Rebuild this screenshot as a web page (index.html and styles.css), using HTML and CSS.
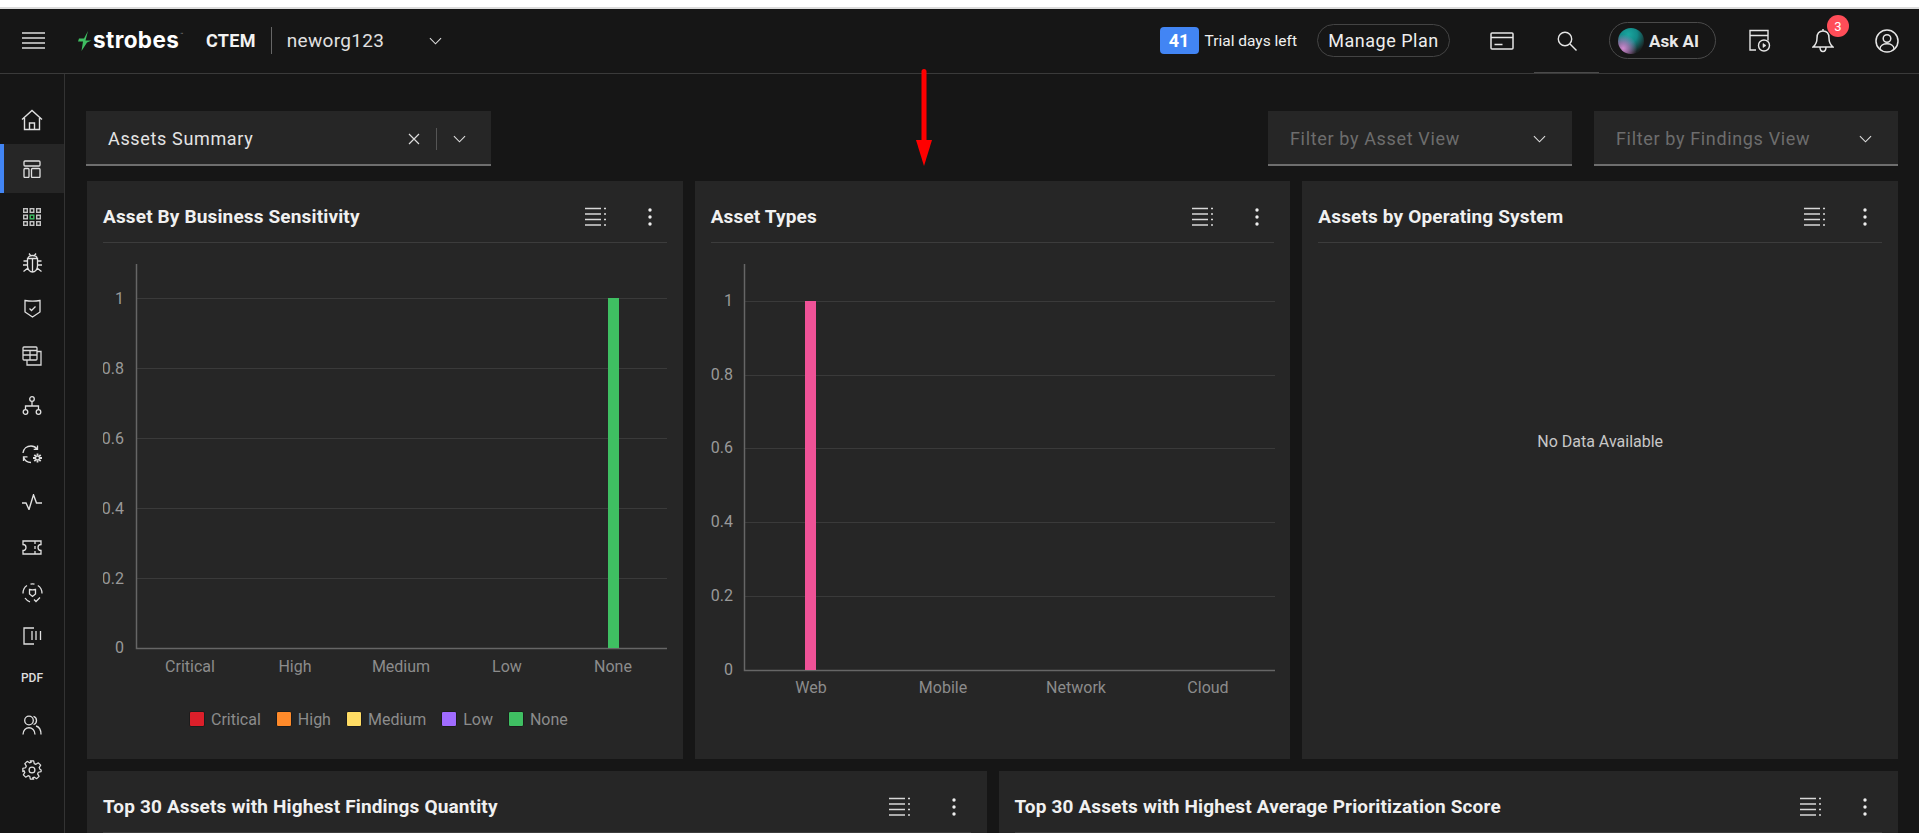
FILE: index.html
```html
<!DOCTYPE html>
<html lang="en">
<head>
<meta charset="utf-8">
<title>Assets Summary</title>
<link rel="stylesheet" href="styles.css">
</head>
<body>
<svg class="defs" width="0" height="0" aria-hidden="true">
  <symbol id="chev" viewBox="0 0 14 8"><path d="M1 1l6 6 6-6" fill="none" stroke="currentColor" stroke-width="1.2"/></symbol>
  <symbol id="list" viewBox="0 0 22 19"><path d="M0 1.5h16M0 7h16M0 12.5h16M0 18h16" stroke="currentColor" stroke-width="1.6"/><path d="M19 1.5h2M19 7h2M19 12.5h2M19 18h2" stroke="currentColor" stroke-width="1.6"/></symbol>
  <symbol id="kebab" viewBox="0 0 4 18"><circle cx="2" cy="2" r="1.7" fill="currentColor"/><circle cx="2" cy="9" r="1.7" fill="currentColor"/><circle cx="2" cy="16" r="1.7" fill="currentColor"/></symbol>
</svg>

<div class="strip"></div>

<header class="header">
  <svg class="burger" width="23" height="17" viewBox="0 0 23 17"><path d="M0 1h23M0 6h23M0 11h23M0 16h23" stroke="#ddd" stroke-width="1.3"/></svg>
  <div class="logo">
    <svg width="14" height="20" viewBox="0 0 14 20"><path d="M10 0L6 7.500H1L0 10.500h5L3.500 20 9 11.500 13.500 9.500H7.500z" fill="#3fbf62"/></svg>
    <span class="logo-text">strobes</span><span class="logo-tm">™</span>
  </div>
  <span class="product">CTEM</span>
  <span class="head-div"></span>
  <span class="org">neworg123</span>
  <svg class="org-chev" width="13" height="8"><use href="#chev"/></svg>

  <div class="head-right">
    <span class="days">41</span>
    <span class="trial">Trial days left</span>
    <span class="plan">Manage Plan</span>
    <svg class="ico-card" width="24" height="18" viewBox="0 0 24 18" fill="none" stroke="#e6e6e6" stroke-width="1.5"><rect x="1" y="1" width="22" height="16" rx="1"/><path d="M1 5.500h22M4.500 12.500h8"/></svg>
    <span class="search-wrap">
      <svg width="20" height="20" viewBox="0 0 20 20" fill="none" stroke="#e6e6e6" stroke-width="1.4"><circle cx="8" cy="8" r="6.700"/><path d="M13 13l6.500 6.500"/></svg>
    </span>
    <span class="ask"><span class="orb"></span><span>Ask AI</span></span>
    <svg class="ico-play" width="22" height="23" viewBox="0 0 22 23" fill="none" stroke="#e6e6e6" stroke-width="1.4"><path d="M1 6.500h18V1.500H1zM1 6.500V21h6M19 6.500v5"/><circle cx="15" cy="16.500" r="5.500"/><path d="M14 14.500v4l3-2z" fill="#e6e6e6" stroke-width=".6"/></svg>
    <span class="bell-wrap">
      <svg width="22" height="25" viewBox="0 0 22 25" fill="none" stroke="#e6e6e6" stroke-width="1.5"><path d="M11 1v2M11 3c-4 0-6 3-6 7 0 5-1.500 7-4 9h20c-2.500-2-4-4-4-9 0-4-2-7-6-7zM8 19c0 6 6 6 6 0"/></svg>
      <span class="bell-badge">3</span>
    </span>
    <svg class="ico-user" width="24" height="24" viewBox="0 0 24 24" fill="none" stroke="#e6e6e6" stroke-width="1.5"><circle cx="12" cy="12" r="11"/><circle cx="12" cy="9.500" r="3.800"/><path d="M5 20c0-7 14-7 14 0"/></svg>
  </div>
</header>

<div class="main">
  <nav class="side">
    <a class="nav-item">
      <svg width="22" height="22" viewBox="0 0 22 22" fill="none" stroke="#e0e0e0" stroke-width="1.4"><path d="M1 10.500L11 1.500l10 9M3.500 9v11.500h15V9M8.500 20.500V14h5v6.500"/></svg>
    </a>
    <a class="nav-item active">
      <svg width="18" height="18" viewBox="0 0 18 18" fill="none" stroke="#e0e0e0" stroke-width="1.3"><rect x="1" y="1" width="16" height="5" rx="1"/><rect x="1" y="8.500" width="5" height="9" rx="1"/><rect x="8.500" y="8.500" width="8.500" height="9" rx="1"/></svg>
    </a>
    <a class="nav-item">
      <svg width="18" height="18" viewBox="0 0 18 18" fill="none" stroke="#c4c4c4" stroke-width="1.400"><rect x=".7" y=".7" width="3.600" height="3.600"/><rect x="7.200" y=".7" width="3.600" height="3.600"/><rect x="13.700" y=".7" width="3.600" height="3.600"/><rect x=".7" y="7.200" width="3.600" height="3.600"/><rect x="7.200" y="7.200" width="3.600" height="3.600" stroke="#3fbf62"/><rect x="13.700" y="7.200" width="3.600" height="3.600"/><rect x=".7" y="13.700" width="3.600" height="3.600"/><rect x="7.200" y="13.700" width="3.600" height="3.600"/><rect x="13.700" y="13.700" width="3.600" height="3.600"/></svg>
    </a>
    <a class="nav-item">
      <svg width="21" height="20" viewBox="0 0 21 20" fill="none" stroke="#e0e0e0" stroke-width="1.300"><path d="M6 5.500C6 3.500 8 2.500 10.500 2.500s4.500 1 4.500 3M5.500 5.500h10V13c0 3.500-2.500 6-5 6s-5-2.500-5-6zM10.500 5.500V19M7 .5l1.500 2M14 .5l-1.500 2M5.500 8H1.500M15.500 8h4M5.500 12H1v0M15.500 12H20M6 15l-4.500 3.500M15 15l4.500 3.500"/></svg>
    </a>
    <a class="nav-item">
      <svg width="17" height="19" viewBox="0 0 17 19" fill="none" stroke="#e0e0e0" stroke-width="1.300"><path d="M1 1.500c5 .8 10 .8 15 0V13l-7.500 5L1 13z"/><path d="M5.500 9.500l2 2 4-4"/></svg>
    </a>
    <a class="nav-item">
      <svg width="20" height="20" viewBox="0 0 20 20" fill="none" stroke="#d8d8d8" stroke-width="1.300"><rect x="1" y="1" width="14" height="13" rx="1"/><path d="M1 4.500h14M1 9h14M8 4.500v9.500M5 14v5h14V5.500h-4"/></svg>
    </a>
    <a class="nav-item">
      <svg width="20" height="19" viewBox="0 0 20 19" fill="none" stroke="#e0e0e0" stroke-width="1.300"><circle cx="10" cy="3" r="2.300"/><circle cx="3.500" cy="16" r="2.300"/><circle cx="16.500" cy="16" r="2.300"/><path d="M10 5.500V10M3.500 13.500V10h13v3.500"/></svg>
    </a>
    <a class="nav-item">
      <svg width="21" height="19" viewBox="0 0 21 19" fill="none" stroke="#e0e0e0" stroke-width="1.300"><path d="M1 8C1.500 3.500 5 1 9 1c2.500 0 4.500 1 6 3M15.500 .5V4.300h-3.800M9 17.500C5 17.500 2.500 15 1.500 12M1.500 16v-4.200h4"/><circle cx="15.500" cy="13" r="2"/><path d="M15.500 8.500v2M15.500 15.500v2M11 13h2M18 13h2M12.300 9.800l1.400 1.400M17.300 14.800l1.400 1.400M12.300 16.200l1.400-1.400M17.300 11.200l1.400-1.400" stroke-width="1.800"/></svg>
    </a>
    <a class="nav-item">
      <svg width="20" height="16" viewBox="0 0 20 16" fill="none" stroke="#e0e0e0" stroke-width="1.400"><path d="M0 9h4l3 6.500L11.500.8l3 8.200H20"/></svg>
    </a>
    <a class="nav-item">
      <svg width="20" height="15" viewBox="0 0 20 15" fill="none" stroke="#e0e0e0" stroke-width="1.300"><path d="M1 1h18v3.500a3 3 0 0 0 0 6V14H1v-3.500a3 3 0 0 0 0-6zM13 1v3M13 6v3M13 11v3"/></svg>
    </a>
    <a class="nav-item">
      <svg width="21" height="20" viewBox="0 0 21 20" fill="none" stroke="#e0e0e0" stroke-width="1.300"><path d="M1 10.500C1 7 2.500 4 5 2.500M8.500 1.200a9 9 0 0 1 4 0M15.800 2.500C18.500 4 20 7 20 10.500M3 15c1 1.500 2.500 3 5 3.800"/><path d="M7.500 6.500c2 .5 4 .5 6 0v4.500l-3 2.500-3-2.500z"/><path d="M12 16.500l2 2 4-4"/></svg>
    </a>
    <a class="nav-item">
      <svg width="19" height="18" viewBox="0 0 19 18" fill="none" stroke="#e0e0e0" stroke-width="1.300"><path d="M11 1H1v16h10"/><path d="M9 4v9M13 4v9M17.500 4v9"/></svg>
    </a>
    <a class="nav-item"><span class="pdf">PDF</span></a>
    <a class="nav-item">
      <svg width="20" height="20" viewBox="0 0 20 20" fill="none" stroke="#e0e0e0" stroke-width="1.300"><circle cx="7" cy="5.500" r="4.300"/><path d="M1 19.500c0-9 12-9 12 0M11.500 1.300a4.300 4.300 0 0 1 0 8.200M14 11c3 .8 5 3.500 5 8.500"/></svg>
    </a>
    <a class="nav-item">
      <svg width="20" height="20" viewBox="0 0 24 24" fill="none" stroke="#e0e0e0" stroke-width="1.500"><circle cx="12" cy="12" r="3.500"/><path d="M10 1h4l.7 3.300 2 .9 2.900-1.800 2.800 2.800-1.800 2.900.9 2L23 12v0l-.1 1.900-3.300.8-.9 2 1.800 2.900-2.800 2.800-2.900-1.800-2 .9L14 23h-4l-.7-3.300-2-.9-2.900 1.800-2.800-2.800 1.800-2.900-.9-2L1 14v-4l3.300-.7.9-2L3.400 4.400l2.800-2.800 2.900 1.800 2-.9z" stroke-linejoin="round"/></svg>
    </a>
  </nav>

  <main class="content">
    <div class="toolbar">
      <div class="select select-main">
        <span class="select-value">Assets Summary</span>
        <svg class="sel-x" width="12" height="12" viewBox="0 0 12 12"><path d="M1 1l10 10M11 1L1 11" stroke="#ddd" stroke-width="1.200"/></svg>
        <span class="sel-div"></span>
        <svg class="sel-chev" width="13" height="8"><use href="#chev"/></svg>
      </div>
      <div class="select select-filter">
        <span class="select-hint">Filter by Asset View</span>
        <svg class="sel-chev" width="13" height="8"><use href="#chev"/></svg>
      </div>
      <div class="select select-filter">
        <span class="select-hint">Filter by Findings View</span>
        <svg class="sel-chev" width="13" height="8"><use href="#chev"/></svg>
      </div>
    </div>

    <section class="row row-3">
      <article class="card">
        <div class="card-head">
          <h2 class="card-title">Asset By Business Sensitivity</h2>
          <svg class="ic-list" width="22" height="19"><use href="#list"/></svg>
          <svg class="ic-kebab" width="4" height="18"><use href="#kebab"/></svg>
        </div>
        <svg class="chart chart-a" width="564" height="465">
          <g class="grid">
            <path d="M34 55.500H564M34 125.500H564M34 195.500H564M34 265.500H564M34 335.500H564"/>
          </g>
          <path class="axis" d="M33.500 21V405.500H564"/>
          <rect x="505" y="55" width="11" height="350" fill="#3fbf62"/>
          <g class="ylab">
            <text x="21" y="61">1</text><text x="21" y="131">0.8</text><text x="21" y="201">0.6</text><text x="21" y="271">0.4</text><text x="21" y="341">0.2</text><text x="21" y="410">0</text>
          </g>
          <g class="xlab">
            <text x="87" y="429">Critical</text><text x="192" y="429">High</text><text x="298" y="429">Medium</text><text x="404" y="429">Low</text><text x="510" y="429">None</text>
          </g>
        </svg>
        <div class="legend">
          <span class="lg"><i class="sw sw-red"></i>Critical</span>
          <span class="lg"><i class="sw sw-orange"></i>High</span>
          <span class="lg"><i class="sw sw-yellow"></i>Medium</span>
          <span class="lg"><i class="sw sw-purple"></i>Low</span>
          <span class="lg"><i class="sw sw-green"></i>None</span>
        </div>
      </article>

      <article class="card">
        <div class="card-head">
          <h2 class="card-title">Asset Types</h2>
          <svg class="ic-list" width="22" height="19"><use href="#list"/></svg>
          <svg class="ic-kebab" width="4" height="18"><use href="#kebab"/></svg>
        </div>
        <svg class="chart chart-b" width="564" height="465">
          <g class="grid">
            <path d="M34 58.500H564M34 132.500H564M34 205.500H564M34 279.500H564M34 353.500H564"/>
          </g>
          <path class="axis" d="M33.500 21V427.500H564"/>
          <rect x="94" y="58" width="11" height="369" fill="#ef5297"/>
          <g class="ylab">
            <text x="22" y="63">1</text><text x="22" y="137">0.8</text><text x="22" y="210">0.6</text><text x="22" y="284">0.4</text><text x="22" y="358">0.2</text><text x="22" y="432">0</text>
          </g>
          <g class="xlab">
            <text x="100" y="450">Web</text><text x="232" y="450">Mobile</text><text x="365" y="450">Network</text><text x="497" y="450">Cloud</text>
          </g>
        </svg>
      </article>

      <article class="card">
        <div class="card-head">
          <h2 class="card-title">Assets by Operating System</h2>
          <svg class="ic-list ic-list-near" width="22" height="19"><use href="#list"/></svg>
          <svg class="ic-kebab" width="4" height="18"><use href="#kebab"/></svg>
        </div>
        <p class="empty">No Data Available</p>
      </article>
    </section>

    <section class="row row-2">
      <article class="card">
        <div class="card-head">
          <h2 class="card-title">Top 30 Assets with Highest Findings Quantity</h2>
          <svg class="ic-list" width="22" height="19"><use href="#list"/></svg>
          <svg class="ic-kebab" width="4" height="18"><use href="#kebab"/></svg>
        </div>
      </article>
      <article class="card">
        <div class="card-head">
          <h2 class="card-title">Top 30 Assets with Highest Average Prioritization Score</h2>
          <svg class="ic-list" width="22" height="19"><use href="#list"/></svg>
          <svg class="ic-kebab" width="4" height="18"><use href="#kebab"/></svg>
        </div>
      </article>
    </section>
  </main>
</div>

<svg class="arrow" width="16" height="97" viewBox="0 0 16 97"><path d="M8 2.500V72" stroke="#f00" stroke-width="5" stroke-linecap="round"/><path d="M0 71h16L8 97z" fill="#f00"/></svg>
</body>
</html>
```
FILE: styles.css
```css
* { box-sizing: border-box; }
html, body { margin: 0; height: 833px; overflow: hidden; }
body {
  position: relative;
  background: #161616;
  color: #e8e8e8;
  font-family: Roboto, "Noto Sans", "Liberation Sans", sans-serif;
}
.defs { position: absolute; }

.strip { height: 9px; background: #fff; border-bottom: 2px solid #dcdcdc; }

/* top bar */
.header {
  display: flex;
  align-items: center;
  height: 65px;
  padding: 0 20px 1px 21px;
  border-bottom: 1px solid #3a3a3a;
}
.burger { flex: none; margin-left: 1px; margin-right: -1px; }
.logo { display: flex; align-items: center; margin-left: 34px; width: 128px; position: relative; }
.logo-text { font-family: Inter, Roboto, sans-serif; font-weight: 700; font-size: 22.500px; margin-left: 1px; letter-spacing: .4px; color: #fff; line-height: 20px; position: relative; top: -1px; }
.logo-tm { font-size: 5px; color: #999; align-self: flex-start; margin-left: 1px; }
.product { font-size: 18px; font-weight: 700; letter-spacing: .3px; color: #f2f2f2; }
.head-div { width: 1px; height: 27px; background: #666; margin: 0 15px 0 15px; }
.org { font-size: 19px; color: #e0e0e0; letter-spacing: .3px; }
.org-chev { color: #ddd; margin-left: 45px; }
.head-right { display: flex; align-items: center; margin-left: auto; }
.days {
  display: flex; align-items: center; justify-content: center;
  width: 39px; height: 27px; border-radius: 4px;
  background: #4285f4; color: #fff; font-weight: 700; font-size: 18px;
}
.trial { font-size: 15.500px; margin-left: 6px; color: #f0f0f0; }
.plan {
  display: flex; align-items: center; justify-content: center;
  width: 133px; height: 33px; margin-left: 20px;
  border: 1px solid #444; border-radius: 17px;
  font-size: 18px; color: #eee; letter-spacing: .5px;
}
.ico-card { margin-left: 40px; }
.search-wrap { display: flex; align-items: center; justify-content: center; width: 65px; height: 64px; margin-left: 20px; position: relative; }
.search-wrap::after { content: ""; position: absolute; left: 0; right: 0; bottom: 0; height: 1px; background: #4a4a4a; }
.ask {
  display: flex; align-items: center; gap: 5px;
  width: 107px; height: 37px; margin-left: 10px; padding-left: 8px;
  border: 1px solid #4a4a4a; border-radius: 19px;
  font-size: 17px; font-weight: 700; color: #e8e8e8;
}
.orb {
  width: 26px; height: 26px; border-radius: 50%; flex: none;
  background:
    radial-gradient(circle at 20% 78%, #d08ad0 0, rgba(190,120,190,.7) 20%, transparent 48%),
    radial-gradient(circle at 40% 25%, #1aa7a0 0, #128a88 35%, transparent 75%),
    #1a2222;
}
.ico-play { margin-left: 33px; }
.bell-wrap { position: relative; display: flex; margin-left: 41px; }
.bell-badge {
  position: absolute; left: 15px; top: -13px;
  width: 22px; height: 22px; border-radius: 50%;
  background: #ff4d58; color: #fff; font-size: 13px;
  display: flex; align-items: center; justify-content: center;
}
.ico-user { margin-left: 41px; }

/* layout */
.main { display: flex; height: 759px; }
.side {
  width: 65px; flex: none;
  border-right: 1px solid #333;
  padding-top: 21px;
  display: grid;
  align-content: start;
  grid-template-rows: 49px 49px 48px 44px 46px 50px 48px 50px 46px 45px 45px 41px 44px 50px 40px;
}
.nav-item { display: flex; align-items: center; justify-content: center; }
.nav-item.active { background: #262626; box-shadow: inset 4px 0 0 #4285f4; }
.pdf { font-size: 12px; font-weight: 500; color: #ddd; }
.content { flex: 1; min-width: 0; padding: 37px 21px 0 21px; }

.toolbar { display: flex; align-items: stretch; height: 55px; }
.select {
  display: flex; align-items: center; height: 55px;
  padding-top: 2px;
  background: #262626; border-bottom: 2px solid #6e6e6e;
  font-size: 18px;
}
.select-main { width: 405px; padding-right: 25px; padding-left: 22px; margin-right: auto; }
.select-value { flex: 1; color: #e4e4e4; letter-spacing: .65px; }
.sel-x { margin-right: 16px; }
.sel-div { width: 1px; height: 22px; background: #555; margin-right: 16px; }
.sel-chev { color: #ddd; flex: none; }
.select-filter { width: 304px; padding-right: 26px; padding-left: 22px; margin-left: 22px; }
.select-hint { flex: 1; color: #6d6d6d; letter-spacing: .65px; }

.row { display: grid; gap: 12px; margin-top: 12px; }
.toolbar + .row { margin-top: 15px; }
.row-3 { grid-template-columns: repeat(3, 1fr); height: 578px; margin-left: 1px; }
.row-2 { grid-template-columns: 1fr 1fr; height: 62px; margin-left: 1px; }
.card { background: #262626; padding: 0 16px; min-width: 0; display: flex; flex-direction: column; }
.card-head {
  display: flex; align-items: center; flex: none;
  height: 62px; padding: 10px 2px 0 0;
  border-bottom: 1px solid #3c3c3c;
}
.card-title { flex: 1; margin: 0; font-size: 19px; font-weight: 700; color: #f0f0f0; letter-spacing: .15px; }
.ic-list { color: #d8d8d8; margin-right: 41px; }
.ic-list-near { margin-right: 37px; }
.ic-kebab { color: #eee; margin-right: 13px; }

.chart { display: block; flex: none; }
.grid path { stroke: #3a3a3a; stroke-width: 1; fill: none; }
.axis { stroke: #666; stroke-width: 1.500; fill: none; }
.ylab text { fill: #999; font-size: 16px; text-anchor: end; }
.xlab text { fill: #8c8c8c; font-size: 16px; text-anchor: middle; }

.legend { display: flex; align-items: center; height: 22px; padding-left: 86px; font-size: 16px; color: #8c8c8c; }
.lg { display: flex; align-items: center; gap: 6px; margin-right: 15px; }
.sw { width: 16px; height: 16px; border-radius: 2px; border: 1px solid #1c1c1c; }
.sw-red { background: #dc1f2a; }
.sw-orange { background: #ff8a2a; }
.sw-yellow { background: #ffdc64; }
.sw-purple { background: #a06bff; }
.sw-green { background: #3fbf62; }

.empty { flex: 1; margin: 0; display: flex; align-items: center; justify-content: center; font-size: 16px; color: #c8c8c8; padding-bottom: 120px; }

.arrow { position: absolute; left: 916px; top: 69px; }
```
